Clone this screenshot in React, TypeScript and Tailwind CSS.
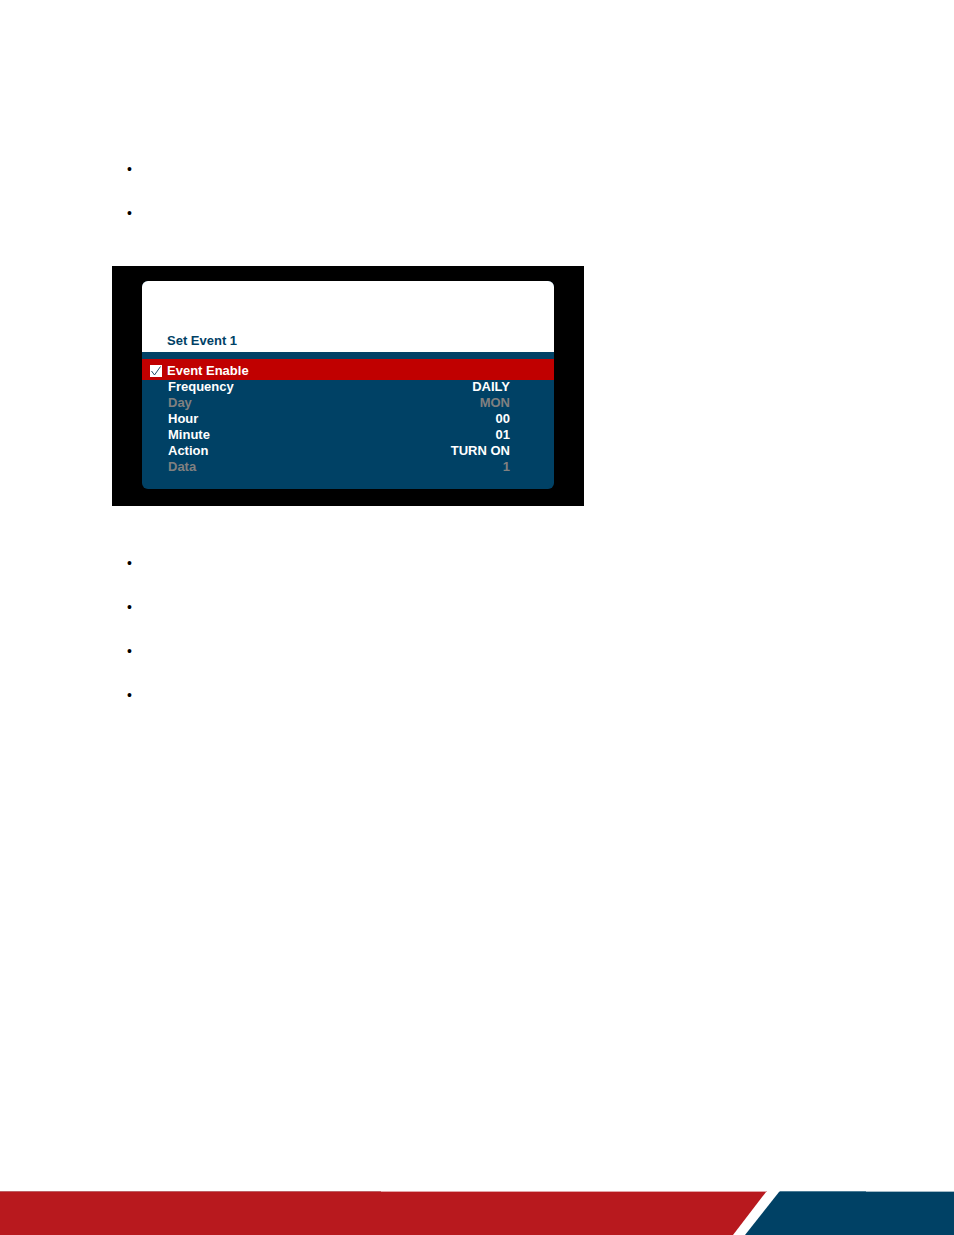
import { useState } from "react";

interface Setting {
  label: string;
  value: string;
  disabled?: boolean;
}

const settings: Setting[] = [
  { label: "Frequency", value: "DAILY" },
  { label: "Day", value: "MON", disabled: true },
  { label: "Hour", value: "00" },
  { label: "Minute", value: "01" },
  { label: "Action", value: "TURN ON" },
  { label: "Data", value: "1", disabled: true },
];

function BulletList({ count }: { count: number }) {
  return (
    <ul className="pl-[15px] text-sm leading-11 text-black">
      {Array.from({ length: count }, (_, i) => (
        <li key={i}>•</li>
      ))}
    </ul>
  );
}

function EventMenu() {
  const [enabled, setEnabled] = useState(true);

  return (
    <section className="w-full max-w-[472px] bg-black px-[30px] pt-[15px] pb-[17px]">
      <div className="overflow-hidden rounded-md bg-[#004165] text-[13px] leading-4 font-bold text-white">
        <header className="bg-white px-[25px] pt-[52px] pb-[3px] text-[#004165]">
          <h1>Set Event 1</h1>
        </header>

        <label htmlFor="event-enable" className="mt-[7px] flex h-[21px] items-center gap-[5px] bg-[#c00000] pt-0.5 pl-2">
          <span className="relative flex">
            <input
              id="event-enable"
              type="checkbox"
              checked={enabled}
              onChange={(e) => setEnabled(e.target.checked)}
              className="size-3 appearance-none bg-white"
            />
            {enabled && (
              <svg viewBox="0 0 12 12" fill="none" className="pointer-events-none absolute inset-0 size-3">
                <path d="M1.5 6L4.5 10L10.5 1.5" stroke="#1f4a66" strokeWidth="1" />
              </svg>
            )}
          </span>
          Event Enable
        </label>

        <dl className="-mt-px pr-11 pb-[14px] pl-[26px]">
          {settings.map((item) => (
            <div
              key={item.label}
              className={`flex justify-between ${item.disabled ? "text-[#808080]" : "text-white"}`}
            >
              <dt>{item.label}</dt>
              <dd>{item.value}</dd>
            </div>
          ))}
        </dl>
      </div>
    </section>
  );
}

function FooterBand() {
  return (
    <footer className="mt-auto">
      <svg viewBox="0 0 954 44" preserveAspectRatio="none" className="block h-11 w-full" aria-hidden="true">
        <path d="M0 1H766L733 44H0Z" fill="#b8191e" />
        <path d="M779 1H954V44H745Z" fill="#004165" />
        {/* thin highlight along the top edge */}
        <path d="M0 0H381V1H0Z" fill="#bd5f64" />
        <path d="M381 0H767V1H381Z" fill="#e3a3a6" />
        <path d="M780 0H866V1H779Z" fill="#4b7b95" />
        <path d="M866 0H954V1H866Z" fill="#a3bac7" />
      </svg>
    </footer>
  );
}

export default function App() {
  return (
    <div className="flex min-h-screen flex-col bg-white font-['Liberation_Sans',Arial,sans-serif]">
      <main className="px-28 pt-[147px] pb-12">
        <BulletList count={2} />
        <div className="pt-[31px] pb-[35px]">
          <EventMenu />
        </div>
        <BulletList count={4} />
      </main>
      <FooterBand />
    </div>
  );
}
